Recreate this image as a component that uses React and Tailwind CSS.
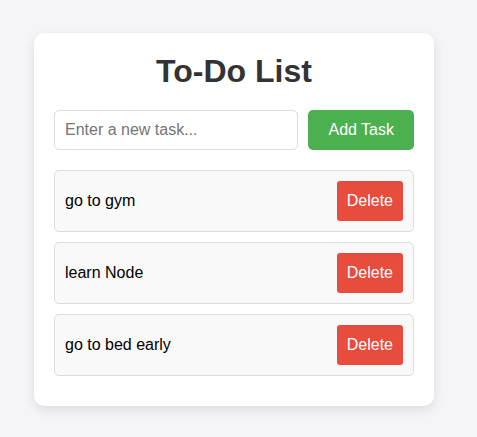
import React, { useState } from "react";

export default function App() {
  const [tasks, setTasks] = useState(["go to gym", "learn Node", "go to bed early"]);
  const [text, setText] = useState("");

  const add = () => {
    if (!text.trim()) return;
    setTasks((t) => [...t, text.trim()]);
    setText("");
  };

  return (
    <div
      className="min-h-[437px] bg-[#f4f4f9] pt-[33px] pl-[34px]"
      style={{ fontFamily: '"Liberation Sans", Arial, sans-serif' }}
    >
      <div className="w-[400px] rounded-[10px] bg-white p-5 shadow-[0_4px_12px_rgba(0,0,0,0.1)]">
        <h1 className="mb-5 text-center text-[32px] font-bold leading-[37px] text-[#333]">To-Do List</h1>
        <div className="mb-5 flex gap-2.5">
          <input
            value={text}
            onChange={(e) => setText(e.target.value)}
            placeholder="Enter a new task..."
            className="h-10 min-w-0 flex-1 rounded-[5px] border border-[#ddd] px-2.5 text-base text-[#333] placeholder:text-[#757575] outline-none"
          />
          <button
            onClick={add}
            className="h-10 rounded-[5px] bg-[#4caf50] px-5 text-base text-white"
          >
            Add Task
          </button>
        </div>
        <ul>
          {tasks.map((t, i) => (
            <li
              key={i}
              className="mb-2.5 flex items-center justify-between rounded-[5px] border border-[#ddd] bg-[#f9f9f9] p-2.5"
            >
              <span className="text-base text-black">{t}</span>
              <button
                onClick={() => setTasks((arr) => arr.filter((_, j) => j !== i))}
                className="h-10 rounded-[3px] bg-[#e74c3c] px-2.5 text-base text-white"
              >
                Delete
              </button>
            </li>
          ))}
        </ul>
      </div>
    </div>
  );
}
